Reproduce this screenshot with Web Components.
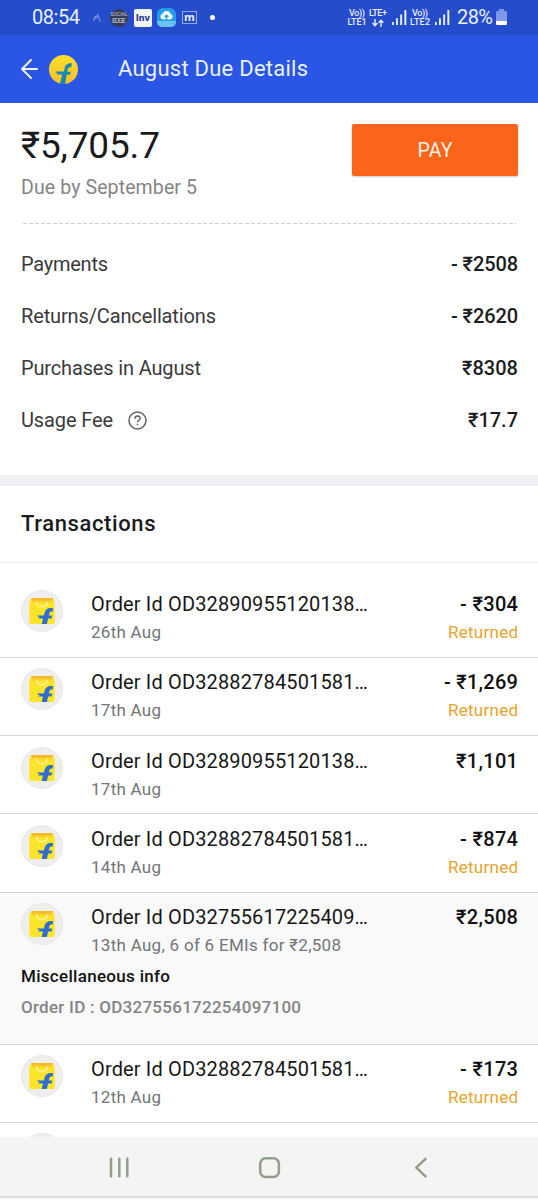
<!DOCTYPE html>
<html lang="en">
<head>
<meta charset="utf-8">
<title>August Due Details</title>
<style>
html,body{margin:0;height:1200px;overflow:hidden;background:#fff}
</style>
</head>
<body>
<due-app></due-app>
<script>
const define = (name, html, setup) => customElements.define(name, class extends HTMLElement {
  connectedCallback() {
    if (this.shadowRoot) return;
    const root = this.attachShadow({mode: 'open'});
    const t = document.createElement('template');
    t.innerHTML = typeof html === 'function' ? html(this) : html;
    root.appendChild(t.content.cloneNode(true));
    if (setup) setup(this, root);
  }
});

// A single line of text, tracked so that it spans `w` pixels.
define('fit-text', `<style>:host{display:inline-block;white-space:nowrap;text-align:left}span{display:inline-block}</style><span><slot></slot></span>`,
  (el, root) => {
    const w = +el.getAttribute('w');
    if (!w) return;
    const s = root.querySelector('span');
    const n = el.textContent.length;
    const ls = (w - s.getBoundingClientRect().width) / (n - 1);
    s.style.letterSpacing = ls + 'px';
    s.style.marginRight = -ls + 'px';
  });

define('signal-bars', `<style>:host{display:block;width:15px;height:15px}svg{display:block}</style>
<svg width="15" height="15" viewBox="0 0 15 15" fill="#e9f1ff"><rect x="0" y="12" width="1.8" height="3"/><rect x="4" y="8.3" width="1.9" height="6.7"/><rect x="8.2" y="4.5" width="1.9" height="10.5"/><rect x="12.4" y="0" width="1.9" height="15"/></svg>`);

define('status-bar', `<style>
:host{display:flex;box-sizing:border-box;height:35px;background:#254ccb;color:#e9f1ff;align-items:center;padding-left:32px}
.time{font-size:20px;width:61px;margin-top:-1px}
svg{display:block}
.edge{width:18px;height:18px;border-radius:50%;background:#343d55;color:#c9d0dc;display:flex;flex-direction:column;align-items:center;justify-content:center;margin-right:6px;font:5px/7px Roboto,sans-serif}
.edge .e{font-size:7px}
.inv{width:18px;height:18px;border-radius:2px;background:#f2f5fd;color:#2b3b92;font:800 9px/18px Inter,sans-serif;display:flex;justify-content:center;margin-right:5px}
.cloud{margin-right:6px}
.m{box-sizing:border-box;width:15px;height:13px;border:1px solid #8fa9ee;font:700 11px/9px "Open Sans",sans-serif;display:flex;justify-content:center;margin-right:13px}
.dot{width:5px;height:5px;border-radius:50%;background:#fff;margin-right:132px}
.lte{font:500 9px/9px Roboto,sans-serif;display:flex;flex-direction:column;align-items:center;height:18px;width:20px}
.lte svg{margin-top:1px}
.pct{font-size:20px;margin-left:7px;margin-top:-1px}
.bat{margin-left:3px}
</style>
<div class="time"><fit-text w="48">08:54</fit-text></div>
<svg style="margin-right:1px" width="16" height="18" fill="none" stroke-width="1.4" stroke-linecap="round"><path d="M0 12l2-3M7 12L5 6l-1 3" stroke="#5f86ee" /><path d="M1.500 9l2-2" stroke="#9f9ad6"/></svg>
<div class="edge"><fit-text>SOCIAL</fit-text><fit-text class="e" w="14">EDGE</fit-text></div>
<div class="inv"><fit-text w="14">Inv</fit-text></div>
<svg class="cloud" width="19" height="19" viewBox="0 0 19 19"><rect width="19" height="19" rx="6" fill="#269de8"/><path d="M0 13h19c0 4-2 6-6 6H6c-4 0-6-2-6-6z" fill="#69c3f3"/><path d="M5.8 11.5a3 3 0 0 1-.2-5.8 4.2 4.2 0 0 1 8 .2 2.9 2.9 0 0 1-.4 5.6z" fill="#fff"/><path d="M9.500 12V7.500M7.700 9l1.800-1.800L11.300 9" fill="none" stroke="#269de8" stroke-width="1.400"/></svg>
<div class="m">m</div><div class="dot"></div>
<div class="lte"><fit-text w="16">Vo))</fit-text><fit-text w="19">LTE1</fit-text></div>
<div class="lte" style="margin-left:1px"><fit-text w="18">LTE+</fit-text><svg width="12" height="8" fill="none" stroke="#e9f1ff" stroke-width="1.4"><path d="M3 0v6.500M.6 4L3 6.700 5.400 4M9 8V1.200M6.600 3.800L9 1.200l2.400 2.600"/></svg></div>
<signal-bars style="margin-left:4px"></signal-bars>
<div class="lte" style="margin-left:3px"><fit-text w="16">Vo))</fit-text><fit-text w="20">LTE2</fit-text></div>
<signal-bars style="margin-left:5px"></signal-bars>
<div class="pct"><fit-text w="36">28%</fit-text></div>
<svg class="bat" width="11" height="17" viewBox="0 0 11 17"><path d="M3 0h5v2h1.500Q11 2 11 3.500v11q0 1.500-1.500 1.500h-8Q0 16 0 14.500v-11Q0 2 1.500 2H3z" fill="#7f98e8"/><path d="M0 12h11v2.500Q11 16 9.500 16h-8Q0 16 0 14.500z" fill="#fff"/></svg>`);

define('app-header', `<style>
:host{display:flex;box-sizing:border-box;height:68px;background:#2a55e5;color:#e9f2ff;align-items:center;padding-left:21px;font-size:22px}
svg{display:block}.logo{margin:0 40px 0 11px}
fit-text{margin-top:-1px}
</style>
<svg width="17" height="20" viewBox="0 0 17 20" fill="none" stroke="#eef4ff" stroke-width="1.900" stroke-linecap="round" stroke-linejoin="round"><path d="M16.200 10H1M10 1L1 10l9 9"/></svg>
<svg class="logo" width="29" height="29" viewBox="0 0 29 29"><defs><linearGradient id="g" x2="0" y2="1"><stop stop-color="#fbe02c"/><stop offset="1" stop-color="#f8bd2b"/></linearGradient></defs><circle cx="14.500" cy="14.500" r="14.500" fill="url(#g)"/><path d="M23 8.500c-2.500-.8-6 .2-7 3.500l-1.200 4.500H8L6 17.500l3 .5-1.500 1.500h5.700L11 28.700q2.500.5 5.300 0l1.200-9H21l.8-3h-3.600l.5-2.500c.4-1.800 1.500-2.200 3.400-2z" fill="#1688b5"/></svg>
<fit-text w="190">August Due Details</fit-text>`);

define('pay-button', el => `<style>
:host{display:flex;width:166px;height:52px;border-radius:2px;background:#fb641b;box-shadow:0 1px 2px #0003;color:#fff2e8;font-size:19.500px;align-items:center;justify-content:center}
</style><fit-text w="35">${el.getAttribute('label')}</fit-text>`);

define('help-icon', `<style>:host{display:block}svg{display:block}</style>
<svg width="19" height="19" viewBox="0 0 19 19" fill="none" stroke="#606066" stroke-width="1.500"><circle cx="9.500" cy="9.500" r="8.500"/><path d="M6.900 7.700c0-3.600 5.300-3.500 5.300-.4 0 2-2.700 2-2.700 4"/><circle cx="9.500" cy="13.500" r=".5" stroke-width=".9"/></svg>`);

define('due-summary', `<style>
:host{display:block;height:120px;padding:0 20px 0 21px}
.top{display:flex;justify-content:space-between;padding-top:21px;height:99px}
.amt{font-size:37px;line-height:44px;color:#1b1b1d}
.due{font-size:19.500px;line-height:24px;color:#858585;margin-top:8px}
.line{height:1px;margin:0 2px;background:repeating-linear-gradient(90deg,#cfcfcf 0 4px,transparent 4px 6px)}
</style>
<div class="top"><div><div class="amt"><fit-text w="139">₹5,705.7</fit-text></div><div class="due"><fit-text w="176">Due by September 5</fit-text></div></div><pay-button label="PAY"></pay-button></div><div class="line"></div>`);

define('summary-row', el => `<style>
:host{display:flex;height:52px;align-items:center;padding:0 20px 0 21px;font-size:20px;color:#3a3a3c}
::slotted(help-icon){margin-left:15px}.v{margin-left:auto;font-weight:500;color:#1c1c1e}
</style><fit-text w="${el.getAttribute('lw')}">${el.getAttribute('label')}</fit-text><slot></slot><fit-text class="v" w="${el.getAttribute('vw')}">${el.getAttribute('value')}</fit-text>`);

define('bag-icon', `<style>:host{display:flex;box-sizing:border-box;width:42px;height:42px;border-radius:50%;background:#eeeeef;border:1px solid #e8e8ea;align-items:center;justify-content:center}svg{display:block}</style>
<svg width="28" height="28" viewBox="0 0 28 28"><path d="M3 1.500h22l1.700 4V25q0 2-2 2H3.300q-2 0-2-2V5.500z" fill="#fbe52b"/><path d="M3.200 1h21.600l-.6 2.800H3.800z" fill="#f5b92b"/><path d="M3.800 3.800h20.400v1.700H3.800z" fill="#f9cf2b"/><path d="M8.500 4.500c0 7 11 7 11 0" fill="none" stroke="#fff3a6" stroke-width="1.400"/><path d="M25.200 11.500c-4-1.500-7.500.5-8.400 3.500l-1 3.500H9l1.500 1.500H12l-2 1.500h5L13.700 27h5.200l1.200-5.500h3.400l.8-3h-3.500l.5-2c.5-1.700 1.700-2.100 3.300-1.800z" fill="#306dcc"/></svg>`);

define('txn-row', el => {
  const a = k => el.getAttribute(k);
  return `<style>
:host{display:block;box-sizing:border-box;height:${a('h') || 78.3}px;border-bottom:1px solid #d6d6d8;background:${a('info') ? '#f9f9fa' : '#fff'}}
.main{display:flex;padding:10.500px 20px 0 21px;height:57.500px}
.mid{margin-left:28px}
.l1{font-size:20px;line-height:28px;color:#171717}
.l2{font-size:17px;line-height:28px;color:#737579}
.right{margin-left:auto;text-align:right}
.right .l1{font-weight:500;color:#111}
.right .l2{color:#e9a22b}
.info{padding-left:21px;font-weight:500;font-size:17px}
.info div{line-height:31.500px}
.t{color:#111;}.o{color:#858585}
</style>
<div class="main"><bag-icon></bag-icon>
<div class="mid"><div class="l1"><fit-text w="277">Order Id ${a('order')}…</fit-text></div><div class="l2"><fit-text w="${a('dw') || 70}">${a('date')}</fit-text></div></div>
<div class="right"><div class="l1"><fit-text w="${a('vw')}">${a('value')}</fit-text></div>${a('returned') !== null ? '<div class="l2"><fit-text w="70">Returned</fit-text></div>' : ''}</div></div>
${a('info') ? `<div class="info"><div class="t"><fit-text w="149">Miscellaneous info</fit-text></div><div class="o"><fit-text w="280">${a('info')}</fit-text></div></div>` : ''}`;
});

define('nav-bar', `<style>
:host{display:flex;position:absolute;left:0;right:0;top:1137px;height:63px;box-sizing:border-box;background:linear-gradient(#f4f4f4 0 59.500px,#dedede 59.500px 61px,#f8f8f8 61px)}
svg{display:block}
</style><svg width="538" height="63" viewBox="0 0 538 63" fill="none" stroke="#929f88" stroke-width="2.500" stroke-linecap="round" stroke-linejoin="round"><path d="M111 21.800v17.500M119.300 21.800v17.500M127.300 21.800v17.500M425.500 21.800l-9.200 8.800 9.200 8.800"/><rect x="260.200" y="21.200" width="18.700" height="18.700" rx="5.500"/></svg>`);

define('due-app', `<style>
:host{display:block;position:relative;width:538px;height:1200px;overflow:hidden;background:#fff;font-family:Roboto,"Liberation Sans",sans-serif}
.rows{padding-top:15px;height:237px}
.band{height:11px;background:#f0f1f5}
h2{margin:0;height:76px;border-bottom:1px solid #ececee;padding-left:21px;font-weight:500;font-size:22px;line-height:76px;color:#1b1b1d}
.list{padding-top:16.500px}
</style>
<status-bar></status-bar><app-header></app-header><due-summary></due-summary>
<div class="rows">
<summary-row label="Payments" lw="87" value="- ₹2508" vw="67"></summary-row>
<summary-row label="Returns/Cancellations" lw="195" value="- ₹2620" vw="67"></summary-row>
<summary-row label="Purchases in August" lw="180" value="₹8308" vw="56"></summary-row>
<summary-row label="Usage Fee" lw="92" value="₹17.7" vw="50"><help-icon></help-icon></summary-row>
</div><div class="band"></div>
<h2><fit-text w="134.500">Transactions</fit-text></h2>
<div class="list">
<txn-row order="OD32890955120138" date="26th Aug" value="- ₹304" vw="58" returned></txn-row>
<txn-row order="OD32882784501581" date="17th Aug" value="- ₹1,269" vw="74" returned></txn-row>
<txn-row order="OD32890955120138" date="17th Aug" value="₹1,101" vw="62"></txn-row>
<txn-row order="OD32882784501581" date="14th Aug" value="- ₹874" vw="58" returned></txn-row>
<txn-row h="152" order="OD32755617225409" date="13th Aug, 6 of 6 EMIs for ₹2,508" dw="250" value="₹2,508" vw="62" info="Order ID : OD327556172254097100"></txn-row>
<txn-row order="OD32882784501581" date="12th Aug" value="- ₹173" vw="58" returned></txn-row>
<txn-row order="OD32882784501581" date="12th Aug" value="- ₹173" vw="58"></txn-row>
</div>
<nav-bar></nav-bar>`);
</script>
</body>
</html>
